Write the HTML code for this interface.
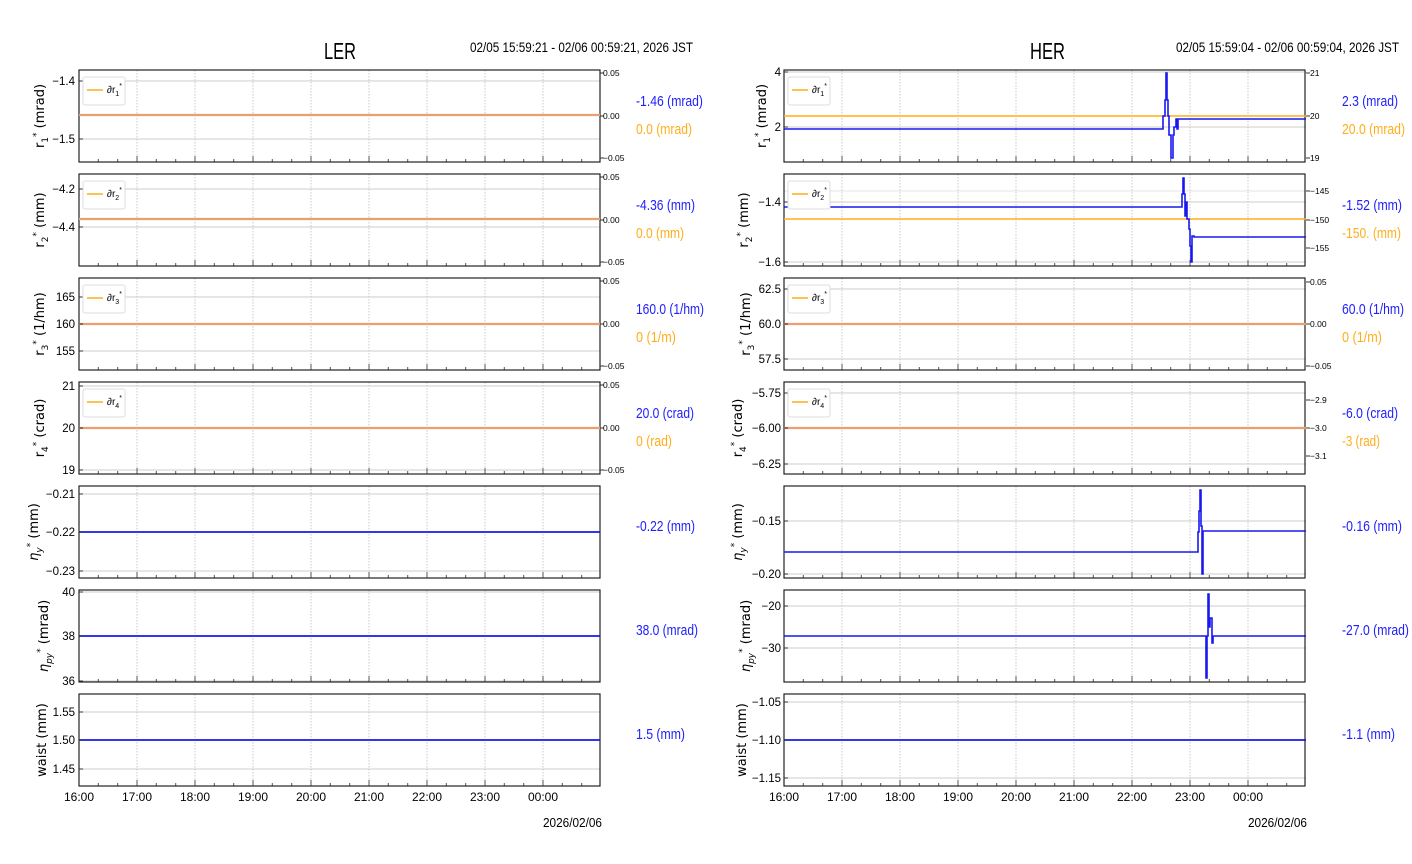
<!DOCTYPE html>
<html><head><meta charset="utf-8">
<style>
html,body{margin:0;padding:0;background:#fff;}
svg{display:block;}
text{font-family:"Liberation Sans",sans-serif;fill:#000;}
.tl{font-size:11.5px;text-anchor:end;}
.tr{font-size:8.5px;}
.xl{font-size:12px;text-anchor:middle;}
.yl{font-family:"DejaVu Sans","Liberation Sans",sans-serif;font-size:13px;text-anchor:middle;}
.vb{font-size:15px;fill:#2020ff;}
.vo{font-size:15px;fill:#ffae1a;}
.lg{font-size:10px;}
</style></head>
<body>
<svg width="1412" height="864" viewBox="0 0 1412 864" xmlns="http://www.w3.org/2000/svg">
<defs>
<g id="fr">
 <g stroke="#c8c8c8" stroke-width="1" stroke-dasharray="1.5,1.5">
  <line x1="58" y1="0" x2="58" y2="92"/><line x1="116" y1="0" x2="116" y2="92"/><line x1="174" y1="0" x2="174" y2="92"/><line x1="232" y1="0" x2="232" y2="92"/><line x1="290" y1="0" x2="290" y2="92"/><line x1="348" y1="0" x2="348" y2="92"/><line x1="406" y1="0" x2="406" y2="92"/><line x1="464" y1="0" x2="464" y2="92"/>
 </g>
 <g stroke="#555" stroke-width="1">
  <line x1="58" y1="92" x2="58" y2="86"/><line x1="116" y1="92" x2="116" y2="86"/><line x1="174" y1="92" x2="174" y2="86"/><line x1="232" y1="92" x2="232" y2="86"/><line x1="290" y1="92" x2="290" y2="86"/><line x1="348" y1="92" x2="348" y2="86"/><line x1="406" y1="92" x2="406" y2="86"/><line x1="464" y1="92" x2="464" y2="86"/>
  <line x1="19.3" y1="92" x2="19.3" y2="89"/><line x1="38.7" y1="92" x2="38.7" y2="89"/><line x1="77.3" y1="92" x2="77.3" y2="89"/><line x1="96.7" y1="92" x2="96.7" y2="89"/><line x1="135.3" y1="92" x2="135.3" y2="89"/><line x1="154.7" y1="92" x2="154.7" y2="89"/><line x1="193.3" y1="92" x2="193.3" y2="89"/><line x1="212.7" y1="92" x2="212.7" y2="89"/><line x1="251.3" y1="92" x2="251.3" y2="89"/><line x1="270.7" y1="92" x2="270.7" y2="89"/><line x1="309.3" y1="92" x2="309.3" y2="89"/><line x1="328.7" y1="92" x2="328.7" y2="89"/><line x1="367.3" y1="92" x2="367.3" y2="89"/><line x1="386.7" y1="92" x2="386.7" y2="89"/><line x1="425.3" y1="92" x2="425.3" y2="89"/><line x1="444.7" y1="92" x2="444.7" y2="89"/><line x1="483.3" y1="92" x2="483.3" y2="89"/><line x1="502.7" y1="92" x2="502.7" y2="89"/>
 </g>
 <rect x="0" y="0" width="521" height="92" fill="none" stroke="#222" stroke-width="1.2"/>
</g>
<g id="leg">
 <rect x="0" y="0" width="42" height="28" rx="2" fill="#fff" stroke="#ddd"/>
 <line x1="4" y1="13" x2="20" y2="13" stroke="#ffae1a" stroke-width="1.5"/>
</g>
</defs>

<!-- Titles -->
<text x="324" y="59" style="font-size:23px" textLength="32" lengthAdjust="spacingAndGlyphs">LER</text>
<text x="470" y="52" style="font-size:14px" textLength="223" lengthAdjust="spacingAndGlyphs">02/05 15:59:21 - 02/06 00:59:21, 2026 JST</text>
<text x="1030" y="59" style="font-size:23px" textLength="35" lengthAdjust="spacingAndGlyphs">HER</text>
<text x="1176" y="52" style="font-size:14px" textLength="223" lengthAdjust="spacingAndGlyphs">02/05 15:59:04 - 02/06 00:59:04, 2026 JST</text>

<!-- ===== LEFT ===== -->
<g transform="translate(79,70)">
 <g stroke="#ccc"><line x1="0" y1="11" x2="521" y2="11"/><line x1="0" y1="69" x2="521" y2="69"/></g>
 <use href="#fr"/>
 <line x1="0" y1="45" x2="521" y2="45" stroke="#e8a070" stroke-width="2.2"/>
 <g stroke="#333"><line x1="0" y1="11" x2="4" y2="11"/><line x1="0" y1="69" x2="4" y2="69"/><line x1="521" y1="3" x2="525" y2="3"/><line x1="521" y1="46" x2="525" y2="46"/><line x1="521" y1="88" x2="525" y2="88"/></g>
 <use href="#leg" x="4" y="7"/>
</g>
<text class="lg" x="107" y="93">∂r<tspan dy="3" font-size="7">1</tspan><tspan dy="-8" font-size="7">*</tspan></text>
<text class="tl" x="75" y="85">−1.4</text><text class="tl" x="75" y="143">−1.5</text>
<text class="tr" x="603" y="76">0.05</text><text class="tr" x="603" y="119">0.00</text><text class="tr" x="603" y="161">−0.05</text>
<text class="yl" transform="translate(44,116) rotate(-90)">r<tspan dy="4" font-size="9">1</tspan><tspan dy="-9" font-size="9">*</tspan><tspan dy="5"> (mrad)</tspan></text>
<text class="vb" x="636" y="106" textLength="67" lengthAdjust="spacingAndGlyphs">-1.46 (mrad)</text><text class="vo" x="636" y="134" textLength="56" lengthAdjust="spacingAndGlyphs">0.0 (mrad)</text>

<g transform="translate(79,174)">
 <g stroke="#ccc"><line x1="0" y1="15" x2="521" y2="15"/><line x1="0" y1="53" x2="521" y2="53"/></g>
 <use href="#fr"/>
 <line x1="0" y1="45" x2="521" y2="45" stroke="#e8a070" stroke-width="2.2"/>
 <g stroke="#333"><line x1="0" y1="15" x2="4" y2="15"/><line x1="0" y1="53" x2="4" y2="53"/><line x1="521" y1="3" x2="525" y2="3"/><line x1="521" y1="46" x2="525" y2="46"/><line x1="521" y1="88" x2="525" y2="88"/></g>
 <use href="#leg" x="4" y="7"/>
</g>
<text class="lg" x="107" y="197">∂r<tspan dy="3" font-size="7">2</tspan><tspan dy="-8" font-size="7">*</tspan></text>
<text class="tl" x="75" y="193">−4.2</text><text class="tl" x="75" y="231">−4.4</text>
<text class="tr" x="603" y="180">0.05</text><text class="tr" x="603" y="223">0.00</text><text class="tr" x="603" y="265">−0.05</text>
<text class="yl" transform="translate(44,220) rotate(-90)">r<tspan dy="4" font-size="9">2</tspan><tspan dy="-9" font-size="9">*</tspan><tspan dy="5"> (mm)</tspan></text>
<text class="vb" x="636" y="210" textLength="59" lengthAdjust="spacingAndGlyphs">-4.36 (mm)</text><text class="vo" x="636" y="238" textLength="48" lengthAdjust="spacingAndGlyphs">0.0 (mm)</text>

<g transform="translate(79,278)">
 <g stroke="#ccc"><line x1="0" y1="19" x2="521" y2="19"/><line x1="0" y1="46" x2="521" y2="46"/><line x1="0" y1="73" x2="521" y2="73"/></g>
 <use href="#fr"/>
 <line x1="0" y1="46" x2="521" y2="46" stroke="#e8a070" stroke-width="2.2"/>
 <g stroke="#333"><line x1="0" y1="19" x2="4" y2="19"/><line x1="0" y1="46" x2="4" y2="46"/><line x1="0" y1="73" x2="4" y2="73"/><line x1="521" y1="3" x2="525" y2="3"/><line x1="521" y1="46" x2="525" y2="46"/><line x1="521" y1="88" x2="525" y2="88"/></g>
 <use href="#leg" x="4" y="7"/>
</g>
<text class="lg" x="107" y="301">∂r<tspan dy="3" font-size="7">3</tspan><tspan dy="-8" font-size="7">*</tspan></text>
<text class="tl" x="75" y="301">165</text><text class="tl" x="75" y="328">160</text><text class="tl" x="75" y="355">155</text>
<text class="tr" x="603" y="284">0.05</text><text class="tr" x="603" y="327">0.00</text><text class="tr" x="603" y="369">−0.05</text>
<text class="yl" transform="translate(44,324) rotate(-90)">r<tspan dy="4" font-size="9">3</tspan><tspan dy="-9" font-size="9">*</tspan><tspan dy="5"> (1/hm)</tspan></text>
<text class="vb" x="636" y="314" textLength="68" lengthAdjust="spacingAndGlyphs">160.0 (1/hm)</text><text class="vo" x="636" y="342" textLength="40" lengthAdjust="spacingAndGlyphs">0 (1/m)</text>

<g transform="translate(79,382)">
 <g stroke="#ccc"><line x1="0" y1="4" x2="521" y2="4"/><line x1="0" y1="46" x2="521" y2="46"/><line x1="0" y1="88" x2="521" y2="88"/></g>
 <use href="#fr"/>
 <line x1="0" y1="46" x2="521" y2="46" stroke="#e8a070" stroke-width="2.2"/>
 <g stroke="#333"><line x1="0" y1="4" x2="4" y2="4"/><line x1="0" y1="46" x2="4" y2="46"/><line x1="0" y1="88" x2="4" y2="88"/><line x1="521" y1="3" x2="525" y2="3"/><line x1="521" y1="46" x2="525" y2="46"/><line x1="521" y1="88" x2="525" y2="88"/></g>
 <use href="#leg" x="4" y="7"/>
</g>
<text class="lg" x="107" y="405">∂r<tspan dy="3" font-size="7">4</tspan><tspan dy="-8" font-size="7">*</tspan></text>
<text class="tl" x="75" y="390">21</text><text class="tl" x="75" y="432">20</text><text class="tl" x="75" y="474">19</text>
<text class="tr" x="603" y="388">0.05</text><text class="tr" x="603" y="431">0.00</text><text class="tr" x="603" y="473">−0.05</text>
<text class="yl" transform="translate(44,428) rotate(-90)">r<tspan dy="4" font-size="9">4</tspan><tspan dy="-9" font-size="9">*</tspan><tspan dy="5"> (crad)</tspan></text>
<text class="vb" x="636" y="418" textLength="58" lengthAdjust="spacingAndGlyphs">20.0 (crad)</text><text class="vo" x="636" y="446" textLength="36" lengthAdjust="spacingAndGlyphs">0 (rad)</text>

<g transform="translate(79,486)">
 <g stroke="#ccc"><line x1="0" y1="8" x2="521" y2="8"/><line x1="0" y1="46" x2="521" y2="46"/><line x1="0" y1="85" x2="521" y2="85"/></g>
 <use href="#fr"/>
 <line x1="0" y1="46" x2="521" y2="46" stroke="#1818ee" stroke-width="1.8"/>
 <g stroke="#333"><line x1="0" y1="8" x2="4" y2="8"/><line x1="0" y1="46" x2="4" y2="46"/><line x1="0" y1="85" x2="4" y2="85"/></g>
</g>
<text class="tl" x="75" y="498">−0.21</text><text class="tl" x="75" y="536">−0.22</text><text class="tl" x="75" y="575">−0.23</text>
<text class="yl" transform="translate(38,532) rotate(-90)"><tspan font-style="italic">η</tspan><tspan dy="4" font-size="9" font-style="italic">y</tspan><tspan dy="-9" font-size="9">*</tspan><tspan dy="5"> (mm)</tspan></text>
<text class="vb" x="636" y="531" textLength="59" lengthAdjust="spacingAndGlyphs">-0.22 (mm)</text>

<g transform="translate(79,590)">
 <g stroke="#ccc"><line x1="0" y1="2" x2="521" y2="2"/><line x1="0" y1="46" x2="521" y2="46"/><line x1="0" y1="91" x2="521" y2="91"/></g>
 <use href="#fr"/>
 <line x1="0" y1="46" x2="521" y2="46" stroke="#1818ee" stroke-width="1.8"/>
 <g stroke="#333"><line x1="0" y1="2" x2="4" y2="2"/><line x1="0" y1="46" x2="4" y2="46"/><line x1="0" y1="91" x2="4" y2="91"/></g>
</g>
<text class="tl" x="75" y="596">40</text><text class="tl" x="75" y="640">38</text><text class="tl" x="75" y="685">36</text>
<text class="yl" transform="translate(48,636) rotate(-90)"><tspan font-style="italic">η</tspan><tspan dy="4" font-size="9" font-style="italic">py</tspan><tspan dy="-9" font-size="9">*</tspan><tspan dy="5"> (mrad)</tspan></text>
<text class="vb" x="636" y="635" textLength="62" lengthAdjust="spacingAndGlyphs">38.0 (mrad)</text>

<g transform="translate(79,694)">
 <g stroke="#ccc"><line x1="0" y1="18" x2="521" y2="18"/><line x1="0" y1="46" x2="521" y2="46"/><line x1="0" y1="75" x2="521" y2="75"/></g>
 <use href="#fr"/>
 <line x1="0" y1="46" x2="521" y2="46" stroke="#1818ee" stroke-width="1.8"/>
 <g stroke="#333"><line x1="0" y1="18" x2="4" y2="18"/><line x1="0" y1="46" x2="4" y2="46"/><line x1="0" y1="75" x2="4" y2="75"/></g>
</g>
<text class="tl" x="75" y="716">1.55</text><text class="tl" x="75" y="744">1.50</text><text class="tl" x="75" y="773">1.45</text>
<text class="yl" transform="translate(46,740) rotate(-90)">waist (mm)</text>
<text class="vb" x="636" y="739" textLength="49" lengthAdjust="spacingAndGlyphs">1.5 (mm)</text>

<text class="xl" x="79" y="801">16:00</text><text class="xl" x="137" y="801">17:00</text><text class="xl" x="195" y="801">18:00</text><text class="xl" x="253" y="801">19:00</text><text class="xl" x="311" y="801">20:00</text><text class="xl" x="369" y="801">21:00</text><text class="xl" x="427" y="801">22:00</text><text class="xl" x="485" y="801">23:00</text><text class="xl" x="543" y="801">00:00</text>
<text x="543" y="827" style="font-size:13px" textLength="59" lengthAdjust="spacingAndGlyphs">2026/02/06</text>

<!-- ===== RIGHT ===== -->
<g transform="translate(784,70)">
 <g stroke="#ccc"><line x1="0" y1="2" x2="522" y2="2"/><line x1="0" y1="57" x2="522" y2="57"/></g>
 <use href="#fr"/>
 <line x1="0" y1="46" x2="522" y2="46" stroke="#ffae1a" stroke-width="1.6"/>
 <polyline fill="none" stroke="#1818ee" stroke-width="1.6" points="0,59 379,59 379,46 381,46 381,30 382,30 382,3 383,3 383,30 384,30 384,46 385,46 385,65 387,65 387,88 389,88 389,65 390,65 390,57 392,57 392,49 393,49 393,59 394,59 394,49 522,49"/>
 <g stroke="#333"><line x1="0" y1="2" x2="4" y2="2"/><line x1="0" y1="57" x2="4" y2="57"/><line x1="522" y1="3" x2="526" y2="3"/><line x1="522" y1="46" x2="526" y2="46"/><line x1="522" y1="88" x2="526" y2="88"/></g>
 <use href="#leg" x="4" y="7"/>
</g>
<text class="lg" x="812" y="93">∂r<tspan dy="3" font-size="7">1</tspan><tspan dy="-8" font-size="7">*</tspan></text>
<text class="tl" x="781" y="76">4</text><text class="tl" x="781" y="131">2</text>
<text class="tr" x="1310" y="76">21</text><text class="tr" x="1310" y="119">20</text><text class="tr" x="1310" y="161">19</text>
<text class="yl" transform="translate(766,116) rotate(-90)">r<tspan dy="4" font-size="9">1</tspan><tspan dy="-9" font-size="9">*</tspan><tspan dy="5"> (mrad)</tspan></text>
<text class="vb" x="1342" y="106" textLength="56" lengthAdjust="spacingAndGlyphs">2.3 (mrad)</text><text class="vo" x="1342" y="134" textLength="63" lengthAdjust="spacingAndGlyphs">20.0 (mrad)</text>

<g transform="translate(784,174)">
 <g stroke="#ccc"><line x1="0" y1="28" x2="522" y2="28"/><line x1="0" y1="88" x2="522" y2="88"/><line x1="0" y1="17" x2="522" y2="17" stroke="#e4e4e4"/></g>
 <use href="#fr"/>
 <line x1="0" y1="45" x2="522" y2="45" stroke="#ffae1a" stroke-width="1.6"/>
 <polyline fill="none" stroke="#1818ee" stroke-width="1.6" points="0,33 398,33 398,20 399,20 399,4 400,4 400,20 401,20 401,42 402,42 402,28 403,28 403,45 405,45 405,55 406,55 406,72 407,72 407,88 408,88 408,62 410,62 410,63 522,63"/>
 <g stroke="#333"><line x1="0" y1="28" x2="4" y2="28"/><line x1="0" y1="88" x2="4" y2="88"/><line x1="522" y1="17" x2="526" y2="17"/><line x1="522" y1="46" x2="526" y2="46"/><line x1="522" y1="74" x2="526" y2="74"/></g>
 <use href="#leg" x="4" y="7"/>
</g>
<text class="lg" x="812" y="197">∂r<tspan dy="3" font-size="7">2</tspan><tspan dy="-8" font-size="7">*</tspan></text>
<text class="tl" x="781" y="206">−1.4</text><text class="tl" x="781" y="266">−1.6</text>
<text class="tr" x="1310" y="194">−145</text><text class="tr" x="1310" y="223">−150</text><text class="tr" x="1310" y="251">−155</text>
<text class="yl" transform="translate(748,220) rotate(-90)">r<tspan dy="4" font-size="9">2</tspan><tspan dy="-9" font-size="9">*</tspan><tspan dy="5"> (mm)</tspan></text>
<text class="vb" x="1342" y="210" textLength="60" lengthAdjust="spacingAndGlyphs">-1.52 (mm)</text><text class="vo" x="1342" y="238" textLength="59" lengthAdjust="spacingAndGlyphs">-150. (mm)</text>

<g transform="translate(784,278)">
 <g stroke="#ccc"><line x1="0" y1="11" x2="522" y2="11"/><line x1="0" y1="46" x2="522" y2="46"/><line x1="0" y1="81" x2="522" y2="81"/></g>
 <use href="#fr"/>
 <line x1="0" y1="46" x2="522" y2="46" stroke="#e8a070" stroke-width="2.2"/>
 <g stroke="#333"><line x1="0" y1="11" x2="4" y2="11"/><line x1="0" y1="46" x2="4" y2="46"/><line x1="0" y1="81" x2="4" y2="81"/><line x1="522" y1="4" x2="526" y2="4"/><line x1="522" y1="46" x2="526" y2="46"/><line x1="522" y1="88" x2="526" y2="88"/></g>
 <use href="#leg" x="4" y="7"/>
</g>
<text class="lg" x="812" y="301">∂r<tspan dy="3" font-size="7">3</tspan><tspan dy="-8" font-size="7">*</tspan></text>
<text class="tl" x="781" y="293">62.5</text><text class="tl" x="781" y="328">60.0</text><text class="tl" x="781" y="363">57.5</text>
<text class="tr" x="1310" y="285">0.05</text><text class="tr" x="1310" y="327">0.00</text><text class="tr" x="1310" y="369">−0.05</text>
<text class="yl" transform="translate(750,324) rotate(-90)">r<tspan dy="4" font-size="9">3</tspan><tspan dy="-9" font-size="9">*</tspan><tspan dy="5"> (1/hm)</tspan></text>
<text class="vb" x="1342" y="314" textLength="62" lengthAdjust="spacingAndGlyphs">60.0 (1/hm)</text><text class="vo" x="1342" y="342" textLength="40" lengthAdjust="spacingAndGlyphs">0 (1/m)</text>

<g transform="translate(784,382)">
 <g stroke="#ccc"><line x1="0" y1="11" x2="522" y2="11"/><line x1="0" y1="46" x2="522" y2="46"/><line x1="0" y1="82" x2="522" y2="82"/></g>
 <use href="#fr"/>
 <line x1="0" y1="46" x2="522" y2="46" stroke="#e8a070" stroke-width="2.2"/>
 <g stroke="#333"><line x1="0" y1="11" x2="4" y2="11"/><line x1="0" y1="46" x2="4" y2="46"/><line x1="0" y1="82" x2="4" y2="82"/><line x1="522" y1="18" x2="526" y2="18"/><line x1="522" y1="46" x2="526" y2="46"/><line x1="522" y1="74" x2="526" y2="74"/></g>
 <use href="#leg" x="4" y="7"/>
</g>
<text class="lg" x="812" y="405">∂r<tspan dy="3" font-size="7">4</tspan><tspan dy="-8" font-size="7">*</tspan></text>
<text class="tl" x="781" y="397">−5.75</text><text class="tl" x="781" y="432">−6.00</text><text class="tl" x="781" y="468">−6.25</text>
<text class="tr" x="1310" y="403">−2.9</text><text class="tr" x="1310" y="431">−3.0</text><text class="tr" x="1310" y="459">−3.1</text>
<text class="yl" transform="translate(742,428) rotate(-90)">r<tspan dy="4" font-size="9">4</tspan><tspan dy="-9" font-size="9">*</tspan><tspan dy="5"> (crad)</tspan></text>
<text class="vb" x="1342" y="418" textLength="56" lengthAdjust="spacingAndGlyphs">-6.0 (crad)</text><text class="vo" x="1342" y="446" textLength="38" lengthAdjust="spacingAndGlyphs">-3 (rad)</text>

<g transform="translate(784,486)">
 <g stroke="#ccc"><line x1="0" y1="35" x2="522" y2="35"/><line x1="0" y1="88" x2="522" y2="88"/></g>
 <use href="#fr"/>
 <polyline fill="none" stroke="#1818ee" stroke-width="1.6" points="0,66 414,66 414,46 415,46 415,25 416,25 416,4 417,4 417,40 418,40 418,88 419,88 419,45 522,45"/>
 <g stroke="#333"><line x1="0" y1="35" x2="4" y2="35"/><line x1="0" y1="88" x2="4" y2="88"/></g>
</g>
<text class="tl" x="781" y="525">−0.15</text><text class="tl" x="781" y="578">−0.20</text>
<text class="yl" transform="translate(742,532) rotate(-90)"><tspan font-style="italic">η</tspan><tspan dy="4" font-size="9" font-style="italic">y</tspan><tspan dy="-9" font-size="9">*</tspan><tspan dy="5"> (mm)</tspan></text>
<text class="vb" x="1342" y="531" textLength="60" lengthAdjust="spacingAndGlyphs">-0.16 (mm)</text>

<g transform="translate(784,590)">
 <g stroke="#ccc"><line x1="0" y1="16" x2="522" y2="16"/><line x1="0" y1="58" x2="522" y2="58"/></g>
 <use href="#fr"/>
 <polyline fill="none" stroke="#1818ee" stroke-width="1.6" points="0,46 422,46 422,88 423,88 423,46 424,46 424,4 425,4 425,37 426,37 426,28 428,28 428,53 429,53 429,46 522,46"/>
 <g stroke="#333"><line x1="0" y1="16" x2="4" y2="16"/><line x1="0" y1="58" x2="4" y2="58"/></g>
</g>
<text class="tl" x="781" y="610">−20</text><text class="tl" x="781" y="652">−30</text>
<text class="yl" transform="translate(750,636) rotate(-90)"><tspan font-style="italic">η</tspan><tspan dy="4" font-size="9" font-style="italic">py</tspan><tspan dy="-9" font-size="9">*</tspan><tspan dy="5"> (mrad)</tspan></text>
<text class="vb" x="1342" y="635" textLength="67" lengthAdjust="spacingAndGlyphs">-27.0 (mrad)</text>

<g transform="translate(784,694)">
 <g stroke="#ccc"><line x1="0" y1="8" x2="522" y2="8"/><line x1="0" y1="46" x2="522" y2="46"/><line x1="0" y1="84" x2="522" y2="84"/></g>
 <use href="#fr"/>
 <line x1="0" y1="46" x2="522" y2="46" stroke="#1818ee" stroke-width="1.8"/>
 <g stroke="#333"><line x1="0" y1="8" x2="4" y2="8"/><line x1="0" y1="46" x2="4" y2="46"/><line x1="0" y1="84" x2="4" y2="84"/></g>
</g>
<text class="tl" x="781" y="706">−1.05</text><text class="tl" x="781" y="744">−1.10</text><text class="tl" x="781" y="782">−1.15</text>
<text class="yl" transform="translate(746,740) rotate(-90)">waist (mm)</text>
<text class="vb" x="1342" y="739" textLength="53" lengthAdjust="spacingAndGlyphs">-1.1 (mm)</text>

<text class="xl" x="784" y="801">16:00</text><text class="xl" x="842" y="801">17:00</text><text class="xl" x="900" y="801">18:00</text><text class="xl" x="958" y="801">19:00</text><text class="xl" x="1016" y="801">20:00</text><text class="xl" x="1074" y="801">21:00</text><text class="xl" x="1132" y="801">22:00</text><text class="xl" x="1190" y="801">23:00</text><text class="xl" x="1248" y="801">00:00</text>
<text x="1248" y="827" style="font-size:13px" textLength="59" lengthAdjust="spacingAndGlyphs">2026/02/06</text>
</svg>
</body></html>
